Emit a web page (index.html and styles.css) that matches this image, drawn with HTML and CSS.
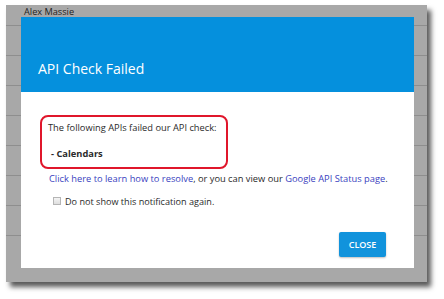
FILE: index.html
```html
<!DOCTYPE html>
<html>
<head>
<meta charset="utf-8">
<link rel="stylesheet" href="styles.css">
</head>
<body>
<div class="frame">
  <div class="rows">
    <div class="row first">Alex Massie</div>
    <div class="row"></div>
    <div class="row"></div>
    <div class="row"></div>
    <div class="row"></div>
    <div class="row"></div>
    <div class="row"></div>
    <div class="row"></div>
    <div class="row last">Anol VPN</div>
  </div>
  <div class="modal">
    <div class="modal-header"><h1 class="title">API Check Failed</h1></div>
    <div class="modal-body">
      <div class="alert">
        <p class="alert-line">The following APIs failed our API check:</p>
        <p class="alert-line bold">- Calendars</p>
      </div>
      <p class="links"><a class="link" href="#">Click here to learn how to resolve</a>, or you can view our <a class="link" href="#">Google API Status page</a>.</p>
      <label class="check"><span class="box"></span>Do not show this notification again.</label>
      <div class="actions"><button class="btn">CLOSE</button></div>
    </div>
  </div>
</div>
</body>
</html>
```
FILE: styles.css
```css
html, body {
  margin: 0;
  padding: 0;
  background: #ffffff;
}
body {
  width: 444px;
  height: 299px;
  overflow: hidden;
  font-family: "Open Sans", "Noto Sans", sans-serif;
  color: #2a2a2a;
}
.frame {
  position: relative;
  margin: 5px 0 0 6px;
  width: 421px;
  height: 277px;
  background: #a8a8a8;
  box-shadow: 4px 5px 5px rgba(0, 0, 0, 0.65);
  overflow: hidden;
}
.rows {
  display: flex;
  flex-direction: column;
}
.row {
  box-sizing: border-box;
  height: 30px;
  border-bottom: 1px solid #8e8e8e;
  padding-left: 18px;
  font-size: 9.2px;
  line-height: 13px;
  color: #222222;
  white-space: nowrap;
}
.row.first {
  height: 21px;
}
.row.last {
  padding-top: 9px;
  border-bottom: none;
}
.modal {
  position: absolute;
  left: 15px;
  top: 12px;
  width: 393px;
  height: 251px;
  background: #ffffff;
  display: flex;
  flex-direction: column;
}
.modal-header {
  height: 75px;
  background: #0590dd;
  display: flex;
  align-items: flex-end;
  padding: 0 0 13px 17px;
  box-sizing: border-box;
}
.title {
  margin: 0;
  font-size: 14px;
  font-weight: 400;
  line-height: 20px;
  color: #ffffff;
}
.modal-body {
  flex: 1;
  display: flex;
  flex-direction: column;
  padding: 23px 0 0 19px;
  font-size: 9.3px;
  white-space: nowrap;
}
.alert {
  box-sizing: border-box;
  width: 188px;
  height: 54px;
  border: 2px solid #e0162b;
  border-radius: 8px;
  padding: 3.5px 0 0 6px;
}
.alert-line {
  margin: 0;
  line-height: 13px;
}
.alert-line.bold {
  font-weight: 700;
  margin-top: 13px;
  padding-left: 3px;
}
.links {
  margin: 2.5px 0 0 9px;
  line-height: 13px;
}
.link {
  color: #3a3fc0;
  text-decoration: none;
}
.check {
  display: flex;
  align-items: center;
  margin: 10px 0 0 13px;
  line-height: 13px;
  font-size: 9.1px;
}
.box {
  box-sizing: border-box;
  width: 8px;
  height: 8px;
  border: 1px solid #b5b5b5;
  background: linear-gradient(#f4f4f4, #dedede);
  margin-right: 4px;
}
.actions {
  display: flex;
  justify-content: flex-end;
  margin-top: 24.5px;
  padding-right: 28px;
}
.btn {
  width: 47px;
  height: 25px;
  border: none;
  border-radius: 2px;
  background: #1193dc;
  color: #ffffff;
  font-family: "Open Sans", "Noto Sans", sans-serif;
  font-size: 9px;
  font-weight: 600;
  padding: 0;
  box-shadow: 0 1px 2px rgba(0, 0, 0, 0.25);
}
```
